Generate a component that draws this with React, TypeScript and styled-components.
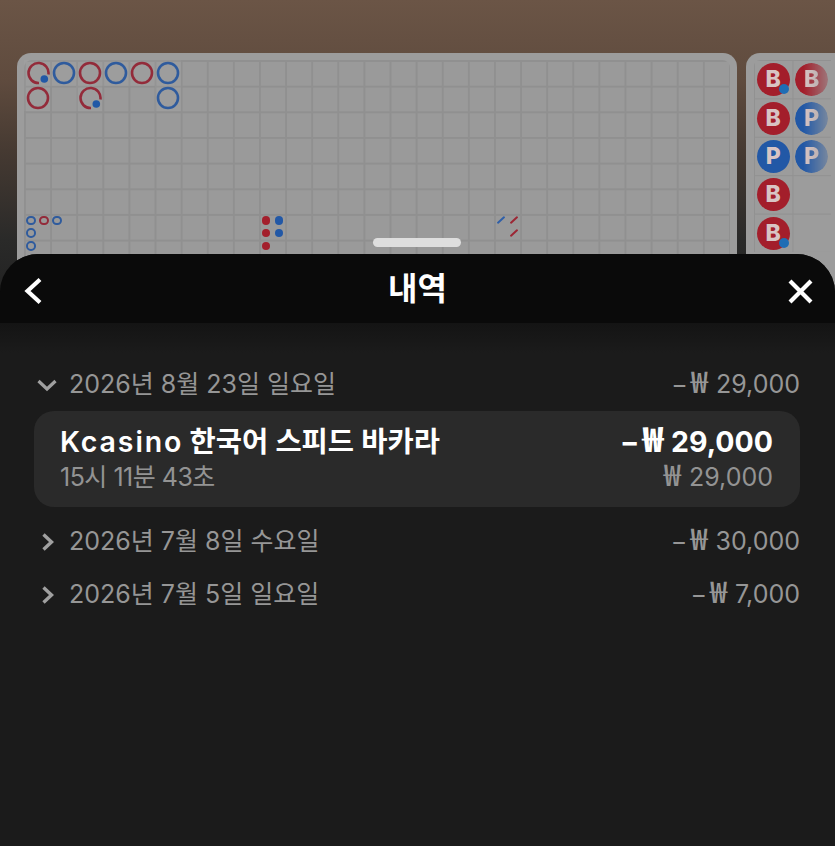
import React from "react";
import styled, {createGlobalStyle} from "styled-components";

const GlobalStyle = createGlobalStyle`
  html, body {
    margin: 0;
    padding: 0;
    background: #1b1b1b;
  }
  * {
    box-sizing: border-box;
  }
`;

const FONT = `Inter, "Noto Sans CJK KR", sans-serif`;
const RED = "#932b3a";
const BLUE = "#2f5b9d";
const CELL_W = 26.11;
const CELL_H = 25.67;

const Page = styled.div`
  position: relative;
  width: 835px;
  height: 846px;
  overflow: hidden;
  font-family: ${FONT};
  background: linear-gradient(180deg, #6b5546 0, #5f4b3e 80px, #463a32 150px, #2a2a29 240px, #222 300px);
`;

const Boards = styled.div`
  display: flex;
  gap: 9px;
  padding: 53px 0 0 17px;
  width: 900px;
`;

const Board = styled.div`
  width: 720px;
  height: 260px;
  flex-shrink: 0;
  padding: 7px 7px 0 7px;
  background: #9c9c9c;
  border-radius: 14px 14px 0 0;
`;

const BoardGrid = styled.div`
  height: 253px;
  border-radius: 8px 8px 0 0;
  background-color: #9a9a9a;
  background-image:
    linear-gradient(#909090 2px, transparent 2px),
    linear-gradient(90deg, #909090 2px, transparent 2px);
  background-size: ${CELL_W}px ${CELL_H}px;
`;

const BigRoad = styled.div`
  display: grid;
  grid-template-columns: repeat(27, ${CELL_W}px);
  grid-template-rows: repeat(6, ${CELL_H}px);
`;

const LowerRoads = styled.div`
  display: grid;
  grid-template-columns: repeat(54, ${CELL_W / 2}px);
  grid-auto-rows: ${CELL_H / 2}px;
`;

const BigCell = styled.div<{$col: number; $row: number}>`
  grid-column: ${p => p.$col + 1};
  grid-row: ${p => p.$row + 1};
  display: flex;
  align-items: center;
  justify-content: center;
  padding-left: 1px;
  background: rgba(255, 255, 255, 0.04);
`;

const SmallCell = styled.div<{$col: number; $row: number}>`
  grid-column: ${p => p.$col + 1};
  grid-row: ${p => p.$row + 1};
  display: flex;
  align-items: center;
  justify-content: center;
  padding-left: 1px;
`;

const SmallRing = styled.span<{$color: string}>`
  width: 9.5px;
  height: 9.5px;
  border-radius: 50%;
  border: 2px solid ${p => p.$color};
`;

const SmallDot = styled.span<{$color: string}>`
  width: 8.5px;
  height: 8.5px;
  border-radius: 50%;
  background: ${p => p.$color};
`;

const Slash = styled.span<{$color: string}>`
  width: 10px;
  height: 2px;
  border-radius: 1px;
  background: ${p => p.$color};
  transform: rotate(-42deg);
`;

const PeekBoard = styled.div`
  width: 110px;
  height: 260px;
  flex-shrink: 0;
  padding: 7px 0 0 8px;
  background: #9c9c9c;
  border-radius: 14px 0 0 0;
`;

const PeekGrid = styled.div`
  display: grid;
  grid-template-columns: repeat(2, 38.5px);
  grid-auto-rows: 38.4px;
  width: 77px;
  border-top-left-radius: 6px;
  background-image:
    linear-gradient(#919191 1px, transparent 1px),
    linear-gradient(90deg, #919191 1px, transparent 1px);
  background-size: 38.5px 38.4px;
`;

const PeekCell = styled.div<{$col: number; $row: number}>`
  grid-column: ${p => p.$col + 1};
  grid-row: ${p => p.$row + 1};
  display: flex;
  align-items: center;
  justify-content: center;
  padding-top: 1px;
`;

const PeekBead = styled.div<{$kind: "B" | "P"; $fade?: boolean}>`
  position: relative;
  width: 33px;
  height: 33px;
  border-radius: 50%;
  display: flex;
  align-items: center;
  justify-content: center;
  font: 800 23px/1 Inter, sans-serif;
  color: #d8c4c4;
  background: ${p => (p.$kind === "B" ? "#a31e2b" : "#2258a6")};
  ${p => p.$fade && `mask-image: linear-gradient(90deg, #000 25%, rgba(0,0,0,.3) 100%);`}
`;

const TieDot = styled.span`
  position: absolute;
  right: 1px;
  bottom: 2px;
  width: 10px;
  height: 10px;
  border-radius: 50%;
  background: #1f6db4;
`;

const Handle = styled.div`
  position: absolute;
  top: -16px;
  left: 373px;
  width: 88px;
  height: 9px;
  border-radius: 5px;
  background: #dedede;
`;

const Sheet = styled.div`
  position: absolute;
  top: 254px;
  left: 0;
  right: 0;
  bottom: 0;
  border-radius: 38px 38px 0 0;
  background: #1b1b1b;
`;

const SheetHeader = styled.header`
  display: flex;
  align-items: center;
  justify-content: space-between;
  height: 69px;
  padding: 5px 20px 0 20px;
  background: #0a0a0a;
  border-radius: 38px 38px 0 0;
`;

const Title = styled.h1`
  margin: -4px 0 0;
  font: 700 32px/1 ${FONT};
  color: #fff;
`;

const IconButton = styled.button`
  width: 30px;
  height: 30px;
  padding: 0;
  border: 0;
  background: none;
  color: #fff;
`;

const SheetBody = styled.div`
  padding: 35px 35px 0 34px;
  background: linear-gradient(180deg, #141414 0, #1b1b1b 30px);
`;

const DayRow = styled.div`
  display: flex;
  align-items: center;
  height: 53px;
  padding-bottom: 1px;
  font-size: 25px;
  line-height: 30px;
  color: #969696;
`;

const Chevron = styled.svg`
  width: 27px;
  height: 27px;
  margin-right: 8px;
  flex-shrink: 0;
  color: #a0a0a0;
`;

const Amount = styled.span`
  margin-left: auto;
`;

const Won = styled.span<{$bold?: boolean}>`
  margin: 0 1px 0 3px;
  font-family: "Noto Sans CJK KR", sans-serif;
  font-size: 1.2em;
  font-weight: ${p => (p.$bold ? 800 : 500)};
  line-height: 0;
`;

const Card = styled.div`
  display: flex;
  flex-direction: column;
  justify-content: center;
  gap: 5px;
  height: 96px;
  margin-bottom: 8px;
  padding: 0 27px 0 26px;
  border-radius: 20px;
  background: #2a2a2a;
`;

const CardRow = styled.div`
  display: flex;
  justify-content: space-between;
  align-items: baseline;
  line-height: 30px;
`;

const GameName = styled.span`
  font-size: 28.5px;
  font-weight: 600;
  color: #fff;
`;

const Brand = styled.span`
  letter-spacing: 1.9px;
  margin-right: -1px;
`;

const GameAmount = styled.span`
  font-size: 28.5px;
  font-weight: 700;
  color: #fff;
`;

const Muted = styled.span`
  font-size: 25px;
  color: #939393;
`;

const Time = styled(Muted)`
  letter-spacing: -0.5px;
`;

type Mark = {col: number; row: number; color: string; tie?: boolean};

const bigRoad: Mark[] = [
    {col: 0, row: 0, color: RED, tie: true},
    {col: 1, row: 0, color: BLUE},
    {col: 2, row: 0, color: RED},
    {col: 3, row: 0, color: BLUE},
    {col: 4, row: 0, color: RED},
    {col: 5, row: 0, color: BLUE},
    {col: 0, row: 1, color: RED},
    {col: 2, row: 1, color: RED, tie: true},
    {col: 5, row: 1, color: BLUE},
];

const bigEye: Mark[] = [
    {col: 0, row: 0, color: BLUE},
    {col: 1, row: 0, color: RED},
    {col: 2, row: 0, color: BLUE},
    {col: 0, row: 1, color: BLUE},
    {col: 0, row: 2, color: BLUE},
];

const smallRoad: Mark[] = [
    {col: 18, row: 0, color: "#a31f2c"},
    {col: 19, row: 0, color: "#2258a6"},
    {col: 18, row: 1, color: "#a31f2c"},
    {col: 19, row: 1, color: "#2258a6"},
    {col: 18, row: 2, color: "#a31f2c"},
];

const cockroach: Mark[] = [
    {col: 36, row: 0, color: "#2f5fa8"},
    {col: 37, row: 0, color: "#9c2634"},
    {col: 37, row: 1, color: "#9c2634"},
];

const beads: {col: number; row: number; kind: "B" | "P"; tie?: boolean; fade?: boolean}[] = [
    {col: 0, row: 0, kind: "B", tie: true},
    {col: 1, row: 0, kind: "B", fade: true},
    {col: 0, row: 1, kind: "B"},
    {col: 1, row: 1, kind: "P", fade: true},
    {col: 0, row: 2, kind: "P"},
    {col: 1, row: 2, kind: "P", fade: true},
    {col: 0, row: 3, kind: "B"},
    {col: 0, row: 4, kind: "B", tie: true},
];

const days = {
    open: {date: "2026년 8월 23일 일요일", amount: "29,000"},
    closed: [
        {date: "2026년 7월 8일 수요일", amount: "30,000"},
        {date: "2026년 7월 5일 일요일", amount: "7,000"},
    ],
};

const Ring = ({color, tie}: {color: string; tie?: boolean}) => (
    <svg width="24" height="24" viewBox="0 0 24 24">
        {tie ? (
            <>
                <path d="M22.4 13.5A10 10 0 1 0 13 22" fill="none" stroke={color} strokeWidth="2.6"/>
                <circle cx="18.3" cy="18" r="3.8" fill="#2258a6"/>
            </>
        ) : (
            <circle cx="12" cy="12" r="10" fill="none" stroke={color} strokeWidth="2.6"/>
        )}
    </svg>
);

const DownIcon = () => (
    <Chevron viewBox="0 0 27 27">
        <path d="M4.5 10L13 18L21.5 10" fill="none" stroke="currentColor" strokeWidth="3.2"/>
    </Chevron>
);

const RightIcon = () => (
    <Chevron viewBox="0 0 27 27">
        <path d="M9.5 6.5L17.5 14L9.5 21.5" fill="none" stroke="currentColor" strokeWidth="3.4"/>
    </Chevron>
);

const App = () => (
    <Page>
        <GlobalStyle/>
        <Boards>
            <Board>
                <BoardGrid>
                    <BigRoad>
                        {bigRoad.map(m => (
                            <BigCell key={`${m.col}-${m.row}`} $col={m.col} $row={m.row}>
                                <Ring color={m.color} tie={m.tie}/>
                            </BigCell>
                        ))}
                    </BigRoad>
                    <LowerRoads>
                        {bigEye.map(m => (
                            <SmallCell key={`e${m.col}-${m.row}`} $col={m.col} $row={m.row}>
                                <SmallRing $color={m.color}/>
                            </SmallCell>
                        ))}
                        {smallRoad.map(m => (
                            <SmallCell key={`s${m.col}-${m.row}`} $col={m.col} $row={m.row}>
                                <SmallDot $color={m.color}/>
                            </SmallCell>
                        ))}
                        {cockroach.map(m => (
                            <SmallCell key={`c${m.col}-${m.row}`} $col={m.col} $row={m.row}>
                                <Slash $color={m.color}/>
                            </SmallCell>
                        ))}
                    </LowerRoads>
                </BoardGrid>
            </Board>
            <PeekBoard>
                <PeekGrid>
                    {beads.map(b => (
                        <PeekCell key={`${b.col}-${b.row}`} $col={b.col} $row={b.row}>
                            <PeekBead $kind={b.kind} $fade={b.fade}>
                                {b.kind}
                                {b.tie && <TieDot/>}
                            </PeekBead>
                        </PeekCell>
                    ))}
                </PeekGrid>
            </PeekBoard>
        </Boards>
        <Sheet>
            <Handle/>
            <SheetHeader>
                <IconButton aria-label="back">
                    <svg viewBox="0 0 30 30" width="30" height="30">
                        <path d="M20 3.5L7.5 15L20 26.5" fill="none" stroke="currentColor" strokeWidth="4.2"/>
                    </svg>
                </IconButton>
                <Title>내역</Title>
                <IconButton aria-label="close">
                    <svg viewBox="0 0 30 30" width="30" height="30">
                        <path d="M5 5L26 26M26 5L5 26" fill="none" stroke="currentColor" strokeWidth="4.2"/>
                    </svg>
                </IconButton>
            </SheetHeader>
            <SheetBody>
                <DayRow>
                    <DownIcon/>
                    {days.open.date}
                    <Amount>−<Won>₩</Won> {days.open.amount}</Amount>
                </DayRow>
                <Card>
                    <CardRow>
                        <GameName><Brand>Kcasino</Brand> 한국어 스피드 바카라</GameName>
                        <GameAmount>−<Won $bold>₩</Won> 29,000</GameAmount>
                    </CardRow>
                    <CardRow>
                        <Time>15시 11분 43초</Time>
                        <Muted><Won>₩</Won> 29,000</Muted>
                    </CardRow>
                </Card>
                {days.closed.map(d => (
                    <DayRow key={d.date}>
                        <RightIcon/>
                        {d.date}
                        <Amount>−<Won>₩</Won> {d.amount}</Amount>
                    </DayRow>
                ))}
            </SheetBody>
        </Sheet>
    </Page>
);

export default App;
